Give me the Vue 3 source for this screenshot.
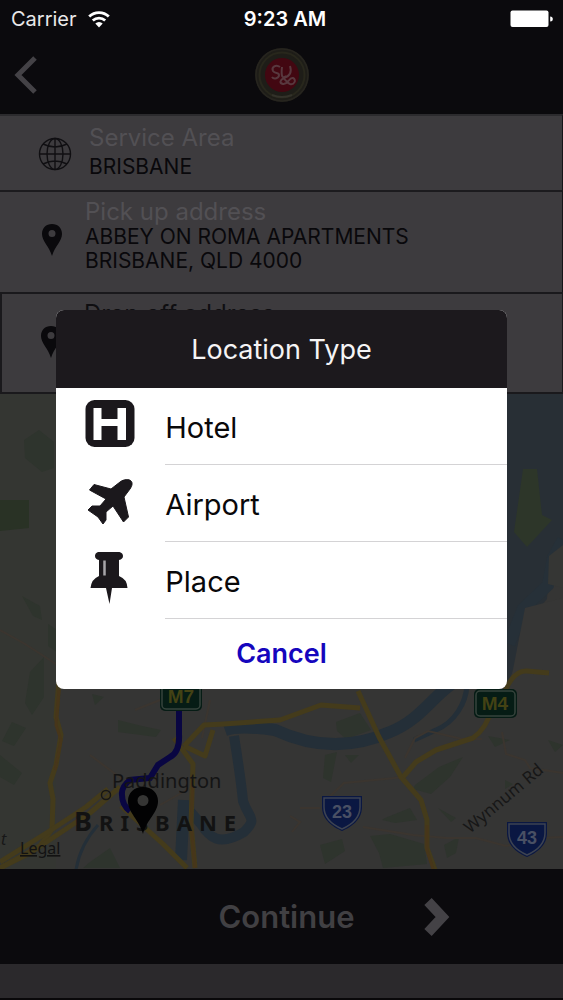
<script setup>
import { ref } from 'vue'

const open = ref(true)
const types = [
  { id: 'hotel', label: 'Hotel' },
  { id: 'airport', label: 'Airport' },
  { id: 'place', label: 'Place' }
]
</script>

<template>
  <div class="screen">
    <header class="top">
      <div class="status">
        <div class="carrier">
          <span>Carrier</span>
          <svg class="wifi" viewBox="0 0 22 17" aria-hidden="true">
            <path d="M1.2 5.600a14 14 0 0 1 19.600 0M4.800 9.600a9 9 0 0 1 12.400 0" fill="none" stroke="#fff" stroke-width="2.800" />
            <path d="M7.300 12.600a5.300 5.300 0 0 1 7.400 0L11 16.400z" fill="#fff" />
          </svg>
        </div>
        <span class="time">9:23 AM</span>
        <svg class="battery" viewBox="0 0 43 18" aria-label="Battery full">
          <rect x="0.5" y="0.5" width="38" height="16.5" rx="2" fill="#fff" />
          <path d="M40.2 6.5q2.6 0 2.6 2.5t-2.6 2.5z" fill="#fff" />
        </svg>
      </div>
      <nav class="nav">
        <button class="back" aria-label="Back">
          <svg viewBox="0 0 24 38"><path d="M21 2L4 19l17 17" fill="none" stroke="#444246" stroke-width="5" /></svg>
        </button>
        <svg class="logo" viewBox="0 0 56 56" aria-label="Logo">
          <circle cx="28" cy="28" r="27" fill="#1e1d18" />
          <circle cx="28" cy="28" r="22.5" fill="none" stroke="#28271c" stroke-width="2" />
          <circle cx="28" cy="28" r="26" fill="none" stroke="#27251f" stroke-width="1.500" />
          <circle cx="28" cy="28" r="17" fill="#420711" />
          <path d="M26 20c-4-3-9 0-7 4 2 3 6 1 6 4s-5 5-7 2M28 20c-1 9 0 12 4 9M36 19c2 6 0 10-6 12-4 2-5 5-1 6 5 1 6-7 10-6 4 2 1 7-3 6-3-1-4-4-7-6" fill="none" stroke="#58383e" stroke-width="2" />
          <path d="M18 48q10 4 20 0" fill="none" stroke="#33322a" stroke-width="2" />
        </svg>
        <span class="spacer"></span>
      </nav>
    </header>

    <main class="main">
      <section class="row area">
        <svg class="globe" viewBox="0 0 34 34" fill="none" stroke="#100f12" stroke-width="1.4" aria-hidden="true">
          <circle cx="17" cy="17" r="15.5" />
          <ellipse cx="17" cy="17" rx="8" ry="15.5" />
          <path d="M17 1.5v31M1.500 17h31M5 7q12 6 24 0M5 27q12-6 24 0" />
        </svg>
        <div class="info shifted">
          <span class="caption">Service Area</span>
          <span class="value">BRISBANE</span>
        </div>
      </section>
      <section class="row pickup">
        <svg class="pin" viewBox="0 0 20 32" aria-hidden="true">
          <path fill-rule="evenodd" d="M10 0C4 0 0 4 0 10c0 7 7 12 10 22 3-10 10-15 10-22C20 4 16 0 10 0zm0 6a3.500 3.500 0 1 1 0 7 3.500 3.500 0 0 1 0-7z" fill="#0a090c" />
        </svg>
        <div class="info">
          <span class="caption">Pick up address</span>
          <span class="value">ABBEY ON ROMA APARTMENTS<br />BRISBANE, QLD 4000</span>
        </div>
      </section>
      <section class="row dropoff">
        <svg class="pin" viewBox="0 0 20 32" aria-hidden="true">
          <path fill-rule="evenodd" d="M10 0C4 0 0 4 0 10c0 7 7 12 10 22 3-10 10-15 10-22C20 4 16 0 10 0zm0 6a3.500 3.500 0 1 1 0 7 3.500 3.500 0 0 1 0-7z" fill="#0a090c" />
        </svg>
        <div class="info">
          <span class="caption dark">Drop off address</span>
        </div>
      </section>

      <div class="map">
        <svg viewBox="0 394 563 475" preserveAspectRatio="xMidYMid slice" role="img" aria-label="Map of Brisbane">
          <rect y="394" width="563" height="475" fill="#353534" />
          <path d="M0 394h56v475H0z" fill="#343632" />
          <!-- parks -->
          <g fill="#2e342d">
            <path d="M24 440l15-10 15 12v26l-12 4-17-14zM22 596l18 10 2 14-9-4zM48 624l12 8v22l-12-8zM30 672l14-15v40l-12 18-7-12zM12 722l14 6-12 18-12-5zM0 755l22 18-8 12-14-8zM118 720l24 6 19 4-5 7-38-5zM92 694l12 3-9 8zM336 722l24-9 11 17-25 9-9-8zM325 755l12-3-6 30-8-4zM345 755h14l-8 8zM385 818l25-10 7 12-22 3-13-3zM415 785l24-18 24-10-13 20-19 17-18-5zM370 836l20-2 34 10 3 20-44 4-4-15zM320 845l22-6 3 12-20 13zM444 845l15-8-3 16-9 5zM438 808l18 10-5 4zM488 736l22 4-15 7zM505 780l8 4-8 5zM548 740l15 5-8 7zM90 862l20-14 10 20H83z" />
            <path d="M0 500h29v28l-29 3z" fill="#293225" />
          </g>
          <!-- water -->
          <path d="M507 394h56v148l-14 30-2 27-22 25-9 40-10 23z" fill="#282f35" />
          <path d="M563 540l-10 18-5 27-25 24-14 35" fill="none" stroke="#263038" stroke-width="12" />
          <path d="M523 469h14l5 46 10 5-25 27-13-15z" fill="#2d3629" />
          <path d="M549 556l14-11v43l-15-4z" fill="#353634" />
          <path d="M525 608l38-10v92h-54z" fill="#363635" />
          <g fill="none" stroke="#242f38">
            <path d="M225 730q14-5 50 0c30 14 70 22 115 2 30-12 42-35 63-49" stroke-width="12" />
            <path d="M234 736q7 44 9 65c6 18 15 17 1 31-25 15-35 5-43-8l-13-15" stroke-width="10" />
            <path d="M184 800l-3 60" stroke-width="12" />
            <path d="M467 685c-1 18-12 37-31 45l-22 10" stroke-width="5" />
            <path d="M98 825q-18 20-22 45" stroke-width="3" />
          </g>
          <!-- minor roads -->
          <g fill="none" stroke="#3b352f" stroke-width="2">
            <path d="M0 630l25 14 31 20M210 700l-8 38M135 710l30-12M160 805l32-18M326 800l18-17 61-6M405 758l10-20 13-7 34 8 20 0M502 732l4 22 19 6 5 8 33 5M300 808h20M363 827l50 8 33 3 30 0 30 8 35-8 22-1M290 816l10 6-8 10M90 755l40 30" />
          </g>
          <!-- main roads -->
          <g fill="none" stroke="#443b1b" stroke-linejoin="round">
            <path d="M59 680l-3 37 5 18-5 30-6 18 3 16-1 30-12 17-40 22" stroke-width="5" />
            <path d="M0 862l48-30 38-25 22-18M0 868l30-15 60-40 30-26M174 738l19 26-2 60 4 44M184 746l20-21 20-1 56-4 41-15 39 3M184 746l21 10 8-26M121 806l42 38 24 24M358 691l21 46 22 40 20 23 6 20v28l8 22" stroke-width="5" />
            <path d="M403 777l13-15 20-12 37-12q14-10 19-30M505 691q9-21 22-20l22 2" stroke-width="5" />
          </g>
          <path d="M59 690l-3 35 5 15-6 30M193 779l-2 45 4 44M427 825v25l6 19" fill="none" stroke="#47361a" stroke-width="3" />
          <!-- planned route -->
          <path d="M179 706v28q1 18-9 23l-12 8-8 13-20 2q-9 7-8 15 0 10 8 16" fill="none" stroke="#090642" stroke-width="6" />
          <!-- place names -->
          <text x="112" y="788" class="suburb">Paddington</text>
          <circle cx="106" cy="795" r="4.500" fill="none" stroke="#161616" stroke-width="1.500" />
          <text x="74" y="831" class="city"><tspan class="initial">B</tspan>RISBANE</text>
          <text x="20" y="854" class="legal">Legal</text>
          <text x="1" y="845" class="edge">t</text>
          <text transform="translate(470 834) rotate(-40)" class="road">Wynnum Rd</text>
          <path d="M143 787c-9 0-15 6-15 14 0 12 11 18 15 33 4-15 15-21 15-33 0-8-6-14-15-14zm0 8a5.500 5.500 0 1 1 0 11 5.500 5.500 0 0 1 0-11z" fill="#020203" fill-rule="evenodd" />
          <!-- highway shields -->
          <g fill="#061c15">
            <rect x="160" y="681" width="42" height="30" rx="5" />
            <rect x="474" y="689" width="43" height="29" rx="5" />
            <rect x="162" y="683" width="38" height="26" rx="4" fill="none" stroke="#36433c" stroke-width="1.500" />
            <rect x="476" y="691" width="39" height="25" rx="4" fill="none" stroke="#36433c" stroke-width="1.500" />
          </g>
          <g fill="#0a1742">
            <path d="M322 796h40v11c0 13-11 20-20 24-9-4-20-11-20-24z" />
            <path d="M507 822h40v11c0 13-11 20-20 24-9-4-20-11-20-24z" />
            <g fill="none" stroke="#3d4351" stroke-width="1.500">
              <path d="M324 798h36v9c0 11-9 18-18 22-9-4-18-11-18-22z" />
              <path d="M509 824h36v9c0 11-9 18-18 22-9-4-18-11-18-22z" />
            </g>
          </g>
          <text x="181" y="703" class="motorway">M7</text>
          <text x="495" y="710" class="motorway">M4</text>
          <text x="342" y="818" class="shield">23</text>
          <text x="527" y="844" class="shield">43</text>
        </svg>
      </div>
    </main>

    <button class="continue">
      <span>Continue</span>
      <svg viewBox="0 0 28 40" aria-hidden="true"><path d="M5 4.500L19.500 20 5 35.500" fill="none" stroke="#444246" stroke-width="10" stroke-linejoin="miter" /></svg>
    </button>
    <div class="bottom"></div>

    <div v-if="open" class="overlay">
      <section class="dialog" role="dialog" aria-modal="true" aria-labelledby="dialog-title">
        <h1 id="dialog-title">Location Type</h1>
        <button v-for="type in types" :key="type.id" class="option" @click="open = false">
          <svg v-if="type.id === 'hotel'" viewBox="0 0 52 52" aria-hidden="true">
            <rect x="1.500" y="2" width="49" height="47" rx="9" fill="#1b181c" />
            <path d="M9.500 10h8v11h16V10h8.500v32h-8.500V28h-16v14h-8z" fill="#fff" />
          </svg>
          <svg v-else-if="type.id === 'airport'" viewBox="0 0 52 52" aria-hidden="true">
            <path d="M47 6c2 2 1 5-1 8l-6 8 4.500 20-5 5L29 31l-7 6v8l-3 4-5-7-10-7 4-4 8 0 6-7L5.500 15 10 9.500 27 14l9-7c4-3 9-3 11-1z" fill="#1b181c" stroke="#1b181c" stroke-width="1" stroke-linejoin="round" />
          </svg>
          <svg v-else viewBox="0 0 52 52" aria-hidden="true">
            <path d="M14 0h21.500q3.500 1 3.500 4t-4 4v16q8 3 8.500 12H28l-2.500 16L22 36H6.500q1-9 8.500-12V8q-4-1-4-4t3-4z" fill="#1b181c" />
            <path d="M20.500 8.500v15" stroke="#a7a5a8" stroke-width="2.500" />
          </svg>
          <span>{{ type.label }}</span>
        </button>
        <button class="cancel" @click="open = false">Cancel</button>
      </section>
    </div>
  </div>
</template>

<style>
body {
  margin: 0;
  background: #0b0a0d;
}
</style>

<style scoped>
.screen {
  position: relative;
  display: flex;
  flex-direction: column;
  min-height: 100vh;
  box-sizing: border-box;
  border-bottom: 2px solid #09080a;
  background: #0b0a0d;
  font-family: Inter, "Liberation Sans", sans-serif;
  color: #09080b;
}

button {
  border: 0;
  padding: 0;
  background: none;
  font-family: inherit;
  cursor: pointer;
}

svg {
  display: block;
  flex: none;
}

.top {
  height: 114px;
}

.status {
  display: grid;
  grid-template-columns: 1fr auto 1fr;
  align-items: center;
  height: 38px;
  padding: 0 10px 0 11px;
  color: #fff;
  font-size: 20px;
}

.carrier {
  display: flex;
  align-items: center;
  gap: 11px;
  color: #e9e8e9;
}

.wifi {
  width: 22px;
  height: 17px;
}

.time {
  padding-left: 6px;
  font-weight: 600;
}

.battery {
  justify-self: end;
  width: 43px;
  height: 18px;
}

.nav {
  display: grid;
  grid-template-columns: 1fr auto 1fr;
  align-items: center;
  height: 74px;
  padding: 0 13px;
}

.back {
  justify-self: start;
}

.back svg {
  width: 26px;
  height: 38px;
}

.logo {
  width: 56px;
  height: 56px;
}

.main {
  flex: 1;
  display: flex;
  flex-direction: column;
}

.row {
  display: flex;
  box-sizing: border-box;
  border-top: 2px solid #2c2b2e;
  border-right: 1px solid #151417;
  background: #3d3b3e;
}

.area {
  min-height: 76px;
  padding: 9px 16px 0 38px;
  gap: 17px;
}

.pickup {
  min-height: 102px;
  padding: 7px 16px 0 42px;
  gap: 23px;
  border-top-color: #1c1b1e;
}

.dropoff {
  min-height: 102px;
  padding: 7px 16px 0 39px;
  gap: 23px;
  border: 2px solid #1a191c;
  border-right-width: 1px;
}

.globe {
  width: 34px;
  height: 34px;
  margin-top: 12px;
}

.pin {
  width: 20px;
  height: 32px;
  margin-top: 25px;
}

.info {
  display: flex;
  flex-direction: column;
}

.caption {
  color: #525054;
  font-size: 24px;
  line-height: 26px;
}

.dark {
  color: #0f0e11;
}

.value {
  font-size: 21px;
  line-height: 24px;
}

.shifted .value {
  margin-top: 4px;
}

.map {
  flex: 1;
  min-height: 475px;
  position: relative;
  overflow: hidden;
}

.map svg {
  position: absolute;
  inset: 0;
  width: 100%;
  height: 100%;
}

.suburb {
  font: 20px "Noto Sans", sans-serif;
  fill: #141414;
}

.city {
  font: 700 22px "Noto Sans", sans-serif;
  letter-spacing: 7px;
  fill: #121212;
}

.initial {
  font-size: 27px;
}

.legal {
  font: 16px "Noto Sans", sans-serif;
  text-decoration: underline;
  fill: #121212;
}

.edge {
  font: italic 16px "Noto Sans", sans-serif;
  fill: #171717;
}

.road {
  font: 17px "Noto Sans", sans-serif;
  fill: #171717;
}

.motorway {
  font: 700 19px "Liberation Sans", sans-serif;
  text-anchor: middle;
  fill: #434214;
}

.shield {
  font: 700 18px "Liberation Sans", sans-serif;
  text-anchor: middle;
  fill: #495064;
}

.continue {
  display: grid;
  grid-template-columns: 1fr auto 1fr;
  column-gap: 68px;
  align-items: center;
  height: 95px;
  padding-left: 10px;
  background: #0b0a0d;
  color: #414043;
  font-size: 31px;
  font-weight: 600;
}

.continue span {
  grid-column: 2;
}

.continue svg {
  width: 28px;
  height: 40px;
}

.bottom {
  height: 34px;
  background: #2b292c;
}

.overlay {
  position: absolute;
  inset: 0;
  display: flex;
  align-items: center;
  justify-content: center;
}

.dialog {
  width: 80%;
  overflow: hidden;
  border-radius: 8px;
  background: #fff;
}

h1 {
  margin: 0;
  padding-top: 1px;
  background: #1c191d;
  color: #f5f4f5;
  font-size: 27px;
  font-weight: 400;
  line-height: 77px;
  text-align: center;
}

.option {
  display: flex;
  align-items: center;
  width: 100%;
  height: 77px;
  padding-left: 28px;
  color: #09080a;
  font-size: 29px;
  text-align: left;
}

.option svg {
  width: 52px;
  height: 52px;
  margin: 0 29px 4px 0;
}

.option span {
  flex: 1;
  box-sizing: border-box;
  height: 77px;
  border-bottom: 1px solid #d4d3d5;
  line-height: 80px;
}

.cancel {
  display: block;
  width: 100%;
  height: 70px;
  color: #1506bd;
  font-size: 27px;
  font-weight: 600;
}
</style>
